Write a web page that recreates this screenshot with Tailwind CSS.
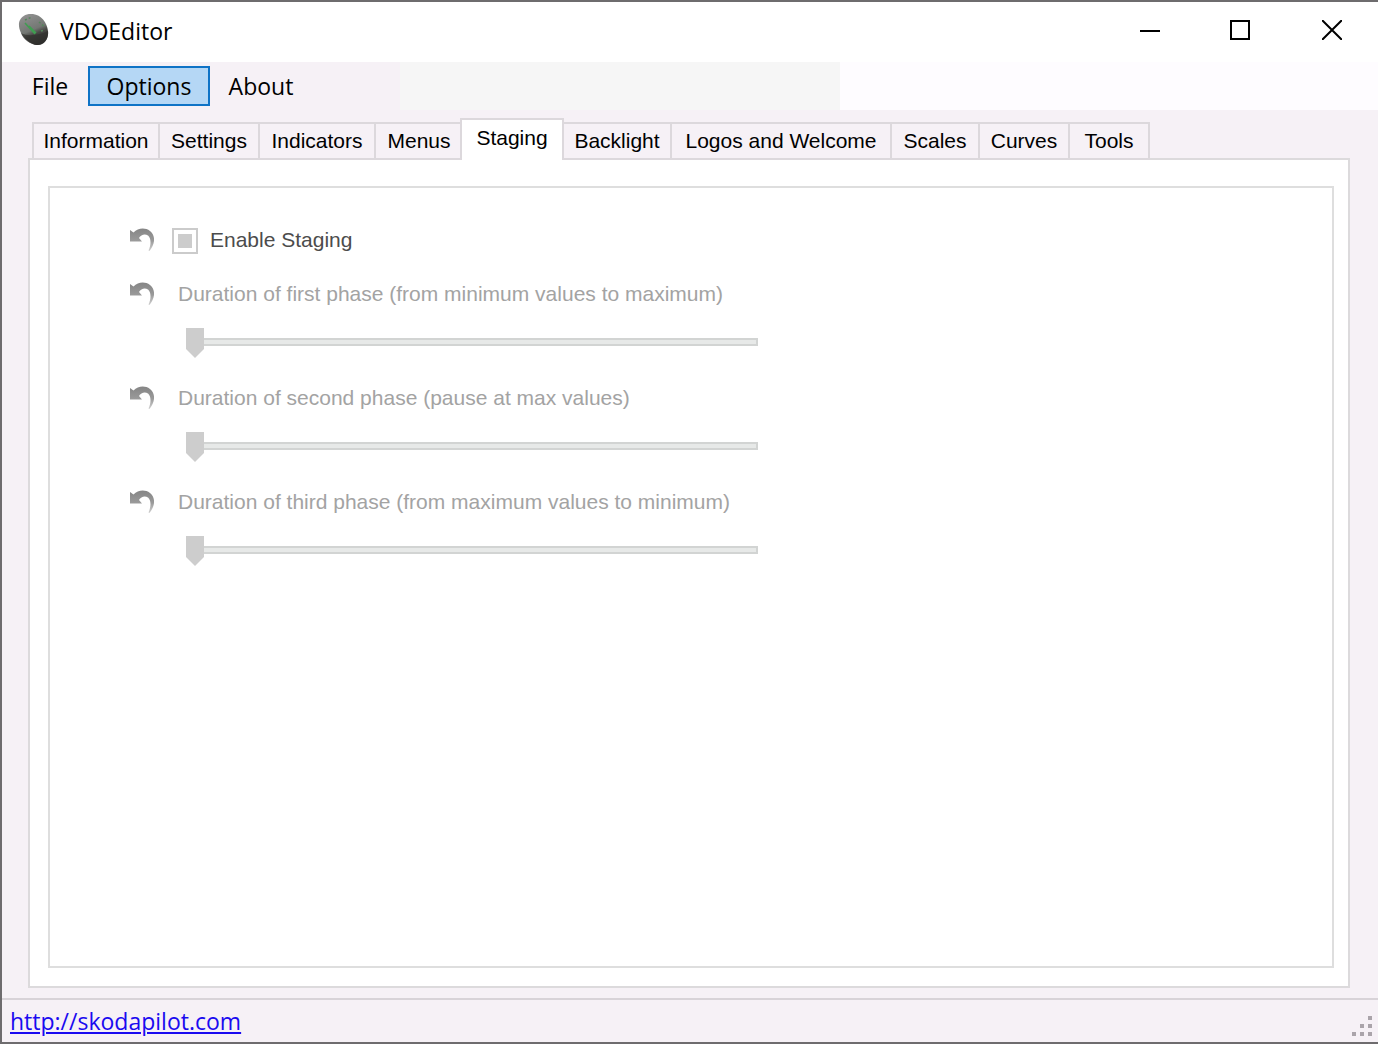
<!DOCTYPE html>
<html lang="en">
<head>
<meta charset="utf-8">
<title>VDOEditor</title>
<script src="https://cdn.jsdelivr.net/npm/@tailwindcss/browser@4"></script>
</head>
<body>
<svg class="absolute size-0" aria-hidden="true">
  <defs>
    <linearGradient id="undoShade" x1="0" y1="0" x2="0" y2="1">
      <stop offset="0" stop-color="#858585"/><stop offset="0.55" stop-color="#9a9a9a"/><stop offset="1" stop-color="#d0d0d0"/>
    </linearGradient>
  </defs>
  <symbol id="undo" viewBox="0 0 26 26">
    <path d="M2 3 L5.500 5.500 C10 1 17 .3 22 4 C28 9 27 17 21.500 24 L20.500 23.500 C23.500 17 23 11 20 8.500 C17 6.300 13 7.500 11 11 L14 14.500 H2Z" fill="url(#undoShade)"/>
  </symbol>
</svg>
<div class="flex min-h-screen flex-col border-y-2 border-l-2 border-[#6e6c6e] bg-[#f6f1f6] text-black">
  <header class="flex h-[60px] bg-white pl-4 font-['Open_Sans',sans-serif]">
    <svg class="mt-3 size-8" viewBox="0 0 32 32">
      <defs>
        <linearGradient id="stone" x1="0.3" y1="0" x2="0.7" y2="1">
          <stop offset="0" stop-color="#909090"/><stop offset="0.5" stop-color="#737773"/><stop offset="0.65" stop-color="#464643"/><stop offset="1" stop-color="#2c2b2a"/>
        </linearGradient>
      </defs>
      <path d="M1 9 C2 3 8 -1 15 0 C23 1 29 8 30 17 C31 25 26 31 20 31 C11 31 0 20 1 9Z" fill="url(#stone)"/>
      <path d="M3 19 C10 23 22 21 30 17 C31 25 26 31 20 31 C12 31 5 25 3 19Z" fill="#30302d" opacity=".65"/>
      <path d="M7 9 L17 20 M11 12 L18 19" stroke="#3f9d50" stroke-width="1.500" fill="none"/>
      <path d="M7 6 L14 3 M21 8 L27 13 M23 17 L27 16" stroke="#55875b" stroke-width="1.500" stroke-dasharray="2 2" fill="none"/>
    </svg>
    <h1 class="mt-[13px] ml-[10px] text-[23px] leading-8">VDOEditor</h1>
    <div class="ml-auto flex h-14">
      <button aria-label="Minimize" class="flex w-[90px] items-center justify-center"><svg class="size-5" viewBox="0 0 20 20"><path d="M0 11H20" stroke="#000" stroke-width="2"/></svg></button>
      <button aria-label="Maximize" class="flex w-[90px] items-center justify-center"><svg class="size-5" viewBox="0 0 20 20"><path d="M1 1H19V19H1Z" fill="none" stroke="#000" stroke-width="2"/></svg></button>
      <button aria-label="Close" class="flex w-[93px] items-center justify-center"><svg class="size-5" viewBox="0 0 20 20"><path d="M0 0L20 20M20 0L0 20" stroke="#000" stroke-width="2"/></svg></button>
    </div>
  </header>

  <nav class="flex h-12 font-['Open_Sans',sans-serif] text-[23px] leading-8">
    <div class="flex w-[398px] shrink-0 items-center pl-3">
      <button class="h-10 w-[74px] pr-0.5">File</button>
      <button class="h-10 w-[122px] border-2 border-[#0f73c6] bg-[#b5d7f5]">Options</button>
      <button class="h-10 w-[102px]">About</button>
    </div>
    <div class="w-[440px] shrink-0 bg-[#f6f6f6]"></div>
    <div class="grow bg-[#fefcff]"></div>
  </nav>

  <main class="flex grow flex-col pt-2 pr-7 pb-[10px] pl-[26px] font-['Liberation_Sans',sans-serif] text-[21px]">
    <div role="tablist" class="relative z-10 -mb-[2px] flex h-[42px] items-end pl-1">
      <button role="tab" class="h-[38px] w-[128px] border-2 border-[#dcd8dc]">Information</button>
      <button role="tab" class="h-[38px] w-[100px] border-2 border-l-0 border-[#dcd8dc]">Settings</button>
      <button role="tab" class="h-[38px] w-[116px] border-2 border-l-0 border-[#dcd8dc]">Indicators</button>
      <button role="tab" class="h-[38px] w-[84px] border-y-2 border-[#dcd8dc] pl-0.5">Menus</button>
      <button role="tab" aria-selected="true" class="h-[42px] w-[104px] border-2 border-b-0 border-[#dcd8dc] bg-white pb-1">Staging</button>
      <button role="tab" class="h-[38px] w-[108px] border-2 border-l-0 border-[#dcd8dc]">Backlight</button>
      <button role="tab" class="h-[38px] w-[220px] border-2 border-l-0 border-[#dcd8dc]">Logos and Welcome</button>
      <button role="tab" class="h-[38px] w-[88px] border-2 border-l-0 border-[#dcd8dc]">Scales</button>
      <button role="tab" class="h-[38px] w-[90px] border-2 border-l-0 border-[#dcd8dc]">Curves</button>
      <button role="tab" class="h-[38px] w-[80px] border-2 border-l-0 border-[#dcd8dc]">Tools</button>
    </div>
    <section role="tabpanel" class="flex grow flex-col border-2 border-[#dcdadc] bg-white pt-[26px] pr-[14px] pb-[18px] pl-[18px]">
      <div class="grow border-2 border-[#dedede] pt-[38px] pl-[78px] text-[#a3a3a3]">
        <div class="flex h-7 items-center">
          <button aria-label="Reset staging"><svg class="size-[26px]"><use href="#undo"/></svg></button>
          <input id="enable" type="checkbox" disabled class="mt-0.5 ml-[18px] size-[26px] appearance-none border-2 border-[#cbcbcb] bg-[#cccccc] shadow-[inset_0_0_0_4px_white]">
          <label for="enable" class="ml-3 leading-7 text-[#4c4c4c]">Enable Staging</label>
        </div>
        <div class="mt-[26px] flex flex-col gap-7">
          <div class="flex flex-col gap-5">
            <div class="flex h-7 items-center">
              <button aria-label="Reset first phase"><svg class="size-[26px]"><use href="#undo"/></svg></button>
              <label for="p1" class="ml-6 leading-7">Duration of first phase (from minimum values to maximum)</label>
            </div>
            <input id="p1" type="range" value="0" disabled class="ml-[58px] h-7 w-[572px] appearance-none bg-transparent [&::-webkit-slider-runnable-track]:h-2 [&::-webkit-slider-runnable-track]:border-y-2 [&::-webkit-slider-runnable-track]:border-r-2 [&::-webkit-slider-runnable-track]:border-[#d2d4d3] [&::-webkit-slider-runnable-track]:bg-[#e7e9e8] [&::-webkit-slider-thumb]:-mt-3 [&::-webkit-slider-thumb]:h-[30px] [&::-webkit-slider-thumb]:w-[18px] [&::-webkit-slider-thumb]:appearance-none [&::-webkit-slider-thumb]:bg-[#cdcdcd] [&::-webkit-slider-thumb]:[clip-path:polygon(0_0,100%_0,100%_70%,50%_100%,0_70%)]">
          </div>
          <div class="flex flex-col gap-5">
            <div class="flex h-7 items-center">
              <button aria-label="Reset second phase"><svg class="size-[26px]"><use href="#undo"/></svg></button>
              <label for="p2" class="ml-6 leading-7">Duration of second phase (pause at max values)</label>
            </div>
            <input id="p2" type="range" value="0" disabled class="ml-[58px] h-7 w-[572px] appearance-none bg-transparent [&::-webkit-slider-runnable-track]:h-2 [&::-webkit-slider-runnable-track]:border-y-2 [&::-webkit-slider-runnable-track]:border-r-2 [&::-webkit-slider-runnable-track]:border-[#d2d4d3] [&::-webkit-slider-runnable-track]:bg-[#e7e9e8] [&::-webkit-slider-thumb]:-mt-3 [&::-webkit-slider-thumb]:h-[30px] [&::-webkit-slider-thumb]:w-[18px] [&::-webkit-slider-thumb]:appearance-none [&::-webkit-slider-thumb]:bg-[#cdcdcd] [&::-webkit-slider-thumb]:[clip-path:polygon(0_0,100%_0,100%_70%,50%_100%,0_70%)]">
          </div>
          <div class="flex flex-col gap-5">
            <div class="flex h-7 items-center">
              <button aria-label="Reset third phase"><svg class="size-[26px]"><use href="#undo"/></svg></button>
              <label for="p3" class="ml-6 leading-7">Duration of third phase (from maximum values to minimum)</label>
            </div>
            <input id="p3" type="range" value="0" disabled class="ml-[58px] h-7 w-[572px] appearance-none bg-transparent [&::-webkit-slider-runnable-track]:h-2 [&::-webkit-slider-runnable-track]:border-y-2 [&::-webkit-slider-runnable-track]:border-r-2 [&::-webkit-slider-runnable-track]:border-[#d2d4d3] [&::-webkit-slider-runnable-track]:bg-[#e7e9e8] [&::-webkit-slider-thumb]:-mt-3 [&::-webkit-slider-thumb]:h-[30px] [&::-webkit-slider-thumb]:w-[18px] [&::-webkit-slider-thumb]:appearance-none [&::-webkit-slider-thumb]:bg-[#cdcdcd] [&::-webkit-slider-thumb]:[clip-path:polygon(0_0,100%_0,100%_70%,50%_100%,0_70%)]">
          </div>
        </div>
      </div>
    </section>
  </main>

  <footer class="flex h-11 items-center justify-between border-t-2 border-[#d8d3d8] pr-1 pl-2 font-['Open_Sans',sans-serif] text-[23px] leading-8">
    <a href="http://skodapilot.com" class="text-[#1a0af0] underline decoration-2 underline-offset-2">http://skodapilot.com</a>
    <svg class="mt-[10px] h-5 w-[22px]" viewBox="0 0 22 20" fill="#aaa4aa"><path d="M16 0h4v4h-4zM8 8h4v4h-4zM16 8h4v4h-4zM0 16h4v4h-4zM8 16h4v4h-4zM16 16h4v4h-4z"/></svg>
  </footer>
</div>
</body>
</html>
